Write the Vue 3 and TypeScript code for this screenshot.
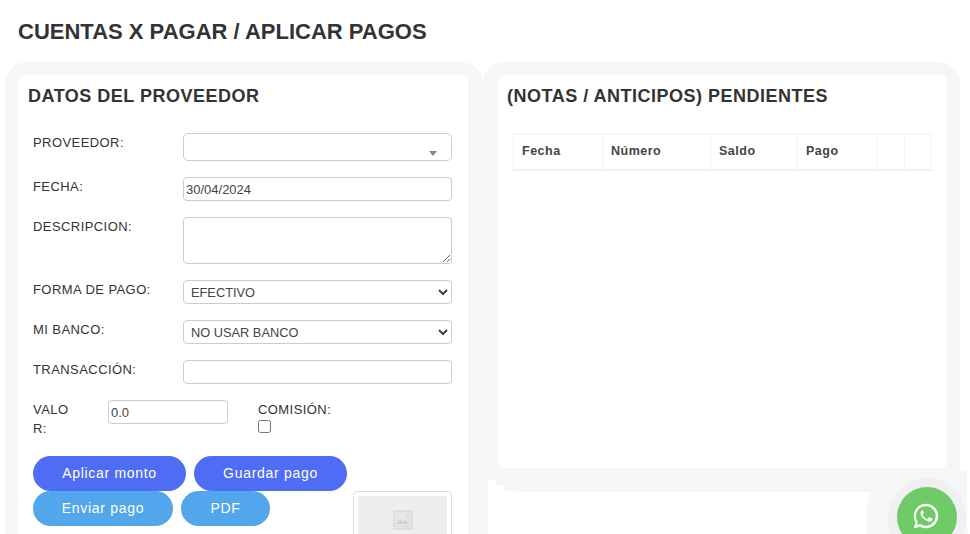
<template>
  <div class="page">
    <h1 class="page-title">CUENTAS X PAGAR / APLICAR PAGOS</h1>
    <div class="content">
      <div class="halo left-halo">
        <section class="card left-card">
          <h2 class="card-title">DATOS DEL PROVEEDOR</h2>
          <div class="form">
            <div class="row row-proveedor">
              <label>PROVEEDOR:</label>
              <div class="fake-select"><span class="caret"></span></div>
            </div>
            <div class="row">
              <label>FECHA:</label>
              <input class="field date" type="text" value="30/04/2024" />
            </div>
            <div class="row">
              <label>DESCRIPCION:</label>
              <textarea class="field area"></textarea>
            </div>
            <div class="row">
              <label>FORMA DE PAGO:</label>
              <select class="field sel">
                <option>EFECTIVO</option>
              </select>
            </div>
            <div class="row">
              <label>MI BANCO:</label>
              <select class="field sel">
                <option>NO USAR BANCO</option>
              </select>
            </div>
            <div class="row">
              <label>TRANSACCIÓN:</label>
              <input class="field" type="text" />
            </div>
            <div class="row-valor">
              <label class="valor-label">VALOR:</label>
              <input class="field valor" type="text" value="0.0" />
              <div class="comision">
                <label>COMISIÓN:</label>
                <input class="check" type="checkbox" />
              </div>
            </div>
            <div class="bottom">
              <div class="buttons">
                <div class="btn-row">
                  <button class="btn primary wide">Aplicar monto</button>
                  <button class="btn primary wide">Guardar pago</button>
                </div>
                <div class="btn-row">
                  <button class="btn info send">Enviar pago</button>
                  <button class="btn info pdf">PDF</button>
                </div>
              </div>
              <div class="thumb">
                <div class="thumb-inner">
                  <svg width="20" height="20" viewBox="0 0 20 20" fill="none">
                    <rect x="1" y="1" width="18" height="18" fill="#e6e6e6" stroke="#dadada" stroke-width="1.5" />
                    <path d="M3 14l4-5 3 3 2-2 5 4z" fill="#d0d0d0" />
                    <circle cx="15" cy="5" r="1.2" fill="#d0d0d0" />
                    <path d="M1 16h18" stroke="#d6d6d6" />
                  </svg>
                </div>
              </div>
            </div>
          </div>
        </section>
      </div>
      <div class="halo right-halo">
        <section class="card right-card">
          <h2 class="card-title">(NOTAS / ANTICIPOS) PENDIENTES</h2>
          <table class="table">
            <thead>
              <tr>
                <th v-for="col in columns" :key="col.name + col.width" :style="{ width: col.width + 'px' }">{{ col.name }}</th>
              </tr>
            </thead>
          </table>
        </section>
        <section class="lower-card"></section>
      </div>
    </div>
    <div class="fab-halo"></div>
    <a class="fab" aria-label="WhatsApp">
      <svg width="30" height="30" viewBox="0 0 24 24" fill="#fff">
        <path d="M12 2.200A9.800 9.800 0 0 0 3.600 17l-1.400 4.900 5-1.300A9.800 9.800 0 1 0 12 2.200zm0 2a7.800 7.800 0 1 1-4.200 14.400l-.4-.2-2.800.7.800-2.700-.3-.4A7.800 7.800 0 0 1 12 4.200z" />
        <path d="M9.100 7.700c-.2 0-.5.1-.7.3-.3.3-.8.8-.8 1.900s.8 2.300.9 2.400c.1.2 1.600 2.500 4 3.500 2 .8 2.400.6 2.800.6.500-.1 1.400-.6 1.600-1.100.2-.5.2-1 .1-1.100-.1-.1-.2-.2-.5-.3l-1.700-.8c-.3-.1-.4-.1-.6.100l-.7 1c-.2.2-.3.2-.6.1-.3-.2-1.100-.4-2.100-1.300-.7-.7-1.300-1.500-1.400-1.800-.1-.3 0-.4.1-.5l.4-.5.3-.4v-.5l-.7-1.800c-.2-.5-.4-.5-.6-.5z" />
      </svg>
    </a>
  </div>
</template>

<script setup lang="ts">
interface Column {
  name: string
  width: number
}

const columns: Column[] = [
  { name: 'Fecha', width: 89 },
  { name: 'Número', width: 108 },
  { name: 'Saldo', width: 87 },
  { name: 'Pago', width: 79 },
  { name: '', width: 28 },
  { name: '', width: 27 }
]
</script>

<style>
html,
body {
  margin: 0;
  height: 100%;
  overflow: hidden;
  background: #fff;
}
</style>

<style scoped>
.page {
  position: relative;
  height: 534px;
  overflow: hidden;
  font-family: "Liberation Sans", Arial, sans-serif;
  color: #333;
}

.page-title {
  margin: 0;
  padding: 18px 18px 0;
  height: 44px;
  font-size: 22px;
  line-height: 27px;
  font-weight: 700;
  color: #333;
}

.content {
  display: flex;
  align-items: flex-start;
  padding-left: 5px;
}

.halo {
  box-sizing: border-box;
  height: 600px;
  padding-top: 13px;
  background: #f5f6f8;
  border-radius: 22px 22px 0 0;
}

.left-halo {
  width: 478px;
  padding-left: 13px;
}

.right-halo {
  width: 477px;
  padding-left: 15px;
}

.card {
  background: #fff;
  box-sizing: border-box;
}

.left-card {
  width: 450px;
  height: 560px;
  padding: 10px 16px 0 10px;
  border-radius: 6px 6px 0 0;
}

.right-card {
  width: 449px;
  height: 393px;
  padding: 10px 15px 0 9px;
  border-radius: 6px;
}

.lower-card {
  position: relative;
  width: 472px;
  height: 200px;
  margin: 24px 0 0 -10px;
  background: #fff;
}

/* stepped top left corner of the lower block */
.lower-card::before {
  content: "";
  position: absolute;
  left: 0;
  top: -12px;
  width: 32px;
  height: 12px;
  background: #fff;
  clip-path: polygon(0 0, 8px 0, 8px 6px, 16px 6px, 16px 10px, 32px 12px, 0 12px);
}

.card-title {
  margin: 0;
  font-size: 18px;
  line-height: 22px;
  font-weight: 700;
  letter-spacing: 0.5px;
  color: #333;
}

.form {
  padding: 26px 0 0 5px;
}

.row {
  display: flex;
  align-items: flex-start;
  margin-bottom: 16px;
}

.row label,
.comision label,
.valor-label {
  font-size: 13px;
  line-height: 19px;
  letter-spacing: 0.43px;
  color: #333;
}

.row label {
  flex: 0 0 150px;
}

.fake-select {
  position: relative;
  box-sizing: border-box;
  width: 269px;
  height: 28px;
  border: 1px solid #ccc;
  border-radius: 5px;
}

.caret {
  position: absolute;
  right: 14px;
  top: 17px;
  border-left: 4px solid transparent;
  border-right: 4px solid transparent;
  border-top: 5px solid #888;
}

.field {
  box-sizing: border-box;
  width: 269px;
  height: 24px;
  padding: 0 2px;
  border: 1px solid #ccc;
  border-radius: 4px;
  background: #fff;
  font-family: "Liberation Sans", Arial, sans-serif;
  font-size: 13px;
  color: #444;
}

.area {
  display: block;
  height: 47px;
}

.sel {
  padding-left: 3px;
  font-size: 12.8px;
}

.row-valor {
  display: flex;
  align-items: flex-start;
  margin-bottom: 18px;
}

.valor-label {
  flex: 0 0 75px;
  padding-right: 30px;
  box-sizing: border-box;
  word-break: break-all;
}

.valor {
  width: 120px;
}

.comision {
  display: flex;
  flex-direction: column;
  align-items: flex-start;
  margin-left: 30px;
}

.check {
  width: 13px;
  height: 13px;
  margin: 1px 0 0;
}

.bottom {
  display: flex;
  align-items: flex-start;
}

.btn-row {
  display: flex;
  gap: 8px;
}

.btn {
  height: 35px;
  padding: 0 0 2px;
  border: 0;
  border-radius: 18px;
  color: #fff;
  font-family: "Liberation Sans", Arial, sans-serif;
  font-size: 14px;
  letter-spacing: 0.7px;
}

.primary {
  background: #4e6cf4;
}

.info {
  background: #52a6ec;
}

.wide {
  width: 153px;
}

.send {
  width: 140px;
}

.pdf {
  width: 89px;
}

.thumb {
  box-sizing: border-box;
  width: 100px;
  height: 90px;
  margin: 35px 0 0 6px;
  padding: 4px;
  border: 1px solid #ddd;
  border-radius: 4px;
}

.thumb-inner {
  display: flex;
  justify-content: center;
  padding-top: 14px;
  height: 80px;
  background: #eee;
}

.table {
  margin: 26px 0 0 6px;
  width: 418px;
  border-collapse: collapse;
  table-layout: fixed;
}

.table th {
  box-sizing: border-box;
  height: 36px;
  padding: 0 8px;
  border: 1px solid #f2f2f2;
  border-bottom-width: 2px;
  font-size: 12.5px;
  letter-spacing: 0.5px;
  text-align: left;
  color: #444;
}

.fab-halo {
  position: absolute;
  left: 866px;
  top: 470px;
  width: 101px;
  height: 64px;
  background: #f5f6f8;
  border-radius: 44px 0 0 0;
}

.fab {
  position: absolute;
  left: 897px;
  top: 487px;
  display: flex;
  align-items: center;
  justify-content: center;
  width: 60px;
  height: 60px;
  border-radius: 50%;
  background: #6ecb68;
  box-shadow: 0 0 0 9px #f0f0f2;
}

.fab svg {
  margin: 0 2px 2px 0;
}
</style>
